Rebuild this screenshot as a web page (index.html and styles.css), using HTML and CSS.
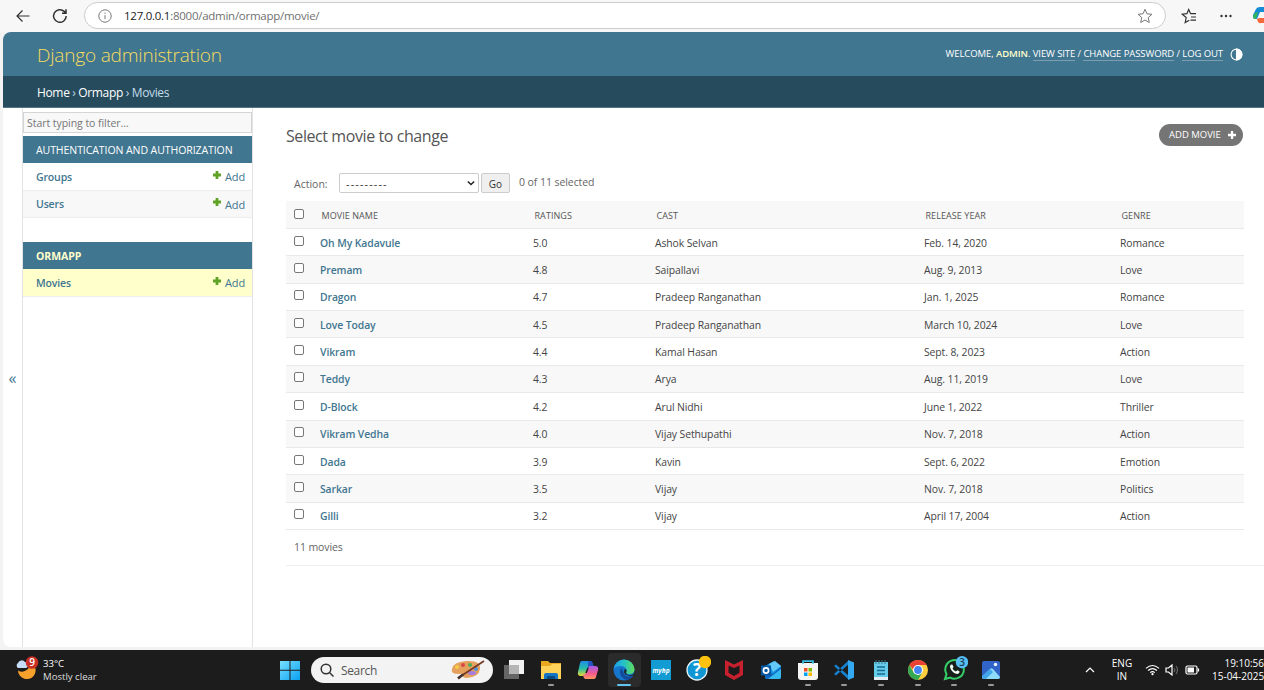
FILE: index.html
```html
<!DOCTYPE html>
<html lang="en">
<head>
<meta charset="utf-8">
<title>Select movie to change | Django site admin</title>
<link rel="stylesheet" href="styles.css">
</head>
<body>
<div class="browser-bar">
  <svg class="nav-icon back" viewBox="0 0 16 16"><path d="M14.500 8H2M7.500 2.500L2 8l5.500 5.500"/></svg>
  <svg class="nav-icon reload" viewBox="0 0 16 16"><path d="M14.200 8a6.300 6.300 0 1 1-2-4.600l1.800 1.800M14 1.300v4h-4"/></svg>
  <div class="address">
    <svg class="info" viewBox="0 0 14 14"><circle cx="7" cy="7" r="6.200"/><path d="M7 6.200v4M7 3.600v1.200"/></svg>
    <span class="url"><b>127.0.0.1</b>:8000/admin/ormapp/movie/</span>
    <svg class="star" viewBox="0 0 16 16"><path d="M8 1.300l2 4.500 4.900.5-3.700 3.300 1.100 4.900L8 12l-4.300 2.500 1.100-4.900L1.100 6.300 6 5.800z"/></svg>
  </div>
  <svg class="nav-icon favs" viewBox="0 0 16 16"><path d="M8.300 12.200l-4.100 2.300 1-5L1.200 6.200l4.700-.5L7.700 1.500l1.900 4.200H15M10 9h5M9.500 12.200H15"/></svg>
  <svg class="dots" viewBox="0 0 12 4"><circle cx="1.500" cy="2" r="1.200"/><circle cx="6" cy="2" r="1.200"/><circle cx="10.500" cy="2" r="1.200"/></svg>
  <svg class="copilot-edge" viewBox="0 0 11 18"><path d="M3 2Q4 0 7 0h4v5H7L4 12H2Q-1 11 0 8z" fill="#168bd5"/><path d="M2 6l3-1-2 7H2Q0 12 0 9z" fill="#36b45a"/><path d="M4 12l2-1h5v5H8Q5 17 4 12z" fill="#f6673e"/></svg>
</div>

<div class="page">
  <header class="site-header">
    <h1 class="brand">Django administration</h1>
    <div class="user-tools">
      <span class="user-text">WELCOME, <b>ADMIN</b>. <a>VIEW SITE</a> / <a>CHANGE PASSWORD</a> / <a>LOG OUT</a></span>
      <svg class="theme" viewBox="0 0 12 12"><circle cx="6" cy="6" r="5"/><path d="M6 1a5 5 0 0 1 0 10z"/></svg>
    </div>
  </header>
  <nav class="breadcrumbs"><span><a>Home</a> › <a>Ormapp</a> › Movies</span></nav>
  <div class="main">
    <div class="toggle">«</div>
    <aside class="sidebar">
      <input class="filter" placeholder="Start typing to filter...">
      <section class="app">
        <h2 class="caption">AUTHENTICATION AND AUTHORIZATION</h2>
        <div class="model"><b>Groups</b><span class="add"><svg viewBox="0 0 10 10"><path d="M3.600 1h2.800v2.600H9v2.800H6.400V9H3.600V6.400H1V3.600h2.600z"/></svg>Add</span></div>
        <div class="model alt"><b>Users</b><span class="add"><svg viewBox="0 0 10 10"><path d="M3.600 1h2.800v2.600H9v2.800H6.400V9H3.600V6.400H1V3.600h2.600z"/></svg>Add</span></div>
      </section>
      <section class="app">
        <h2 class="caption current">ORMAPP</h2>
        <div class="model selected"><b>Movies</b><span class="add"><svg viewBox="0 0 10 10"><path d="M3.600 1h2.800v2.600H9v2.800H6.400V9H3.600V6.400H1V3.600h2.600z"/></svg>Add</span></div>
      </section>
    </aside>
    <main class="content">
      <div class="title-row">
        <h2 class="title">Select movie to change</h2>
        <a class="add-movie"><span>ADD MOVIE</span><svg viewBox="0 0 10 10"><path d="M5 1v8M1 5h8"/></svg></a>
      </div>
      <div class="actions">
        <span class="action-label">Action:</span>
        <span class="select"><span>---------</span><svg viewBox="0 0 10 6"><path d="M1 1l4 4 4-4"/></svg></span>
        <span class="go">Go</span>
        <span class="counter">0 of 11 selected</span>
      </div>
      <div class="results">
        <div class="row head"><i class="check"></i><span>MOVIE NAME</span><span>RATINGS</span><span>CAST</span><span>RELEASE YEAR</span><span>GENRE</span></div>
        <div class="row"><i class="check"></i><b>Oh My Kadavule</b><span>5.0</span><span>Ashok Selvan</span><span>Feb. 14, 2020</span><span>Romance</span></div>
        <div class="row"><i class="check"></i><b>Premam</b><span>4.8</span><span>Saipallavi</span><span>Aug. 9, 2013</span><span>Love</span></div>
        <div class="row"><i class="check"></i><b>Dragon</b><span>4.7</span><span>Pradeep Ranganathan</span><span>Jan. 1, 2025</span><span>Romance</span></div>
        <div class="row"><i class="check"></i><b>Love Today</b><span>4.5</span><span>Pradeep Ranganathan</span><span>March 10, 2024</span><span>Love</span></div>
        <div class="row"><i class="check"></i><b>Vikram</b><span>4.4</span><span>Kamal Hasan</span><span>Sept. 8, 2023</span><span>Action</span></div>
        <div class="row"><i class="check"></i><b>Teddy</b><span>4.3</span><span>Arya</span><span>Aug. 11, 2019</span><span>Love</span></div>
        <div class="row"><i class="check"></i><b>D-Block</b><span>4.2</span><span>Arul Nidhi</span><span>June 1, 2022</span><span>Thriller</span></div>
        <div class="row"><i class="check"></i><b>Vikram Vedha</b><span>4.0</span><span>Vijay Sethupathi</span><span>Nov. 7, 2018</span><span>Action</span></div>
        <div class="row"><i class="check"></i><b>Dada</b><span>3.9</span><span>Kavin</span><span>Sept. 6, 2022</span><span>Emotion</span></div>
        <div class="row"><i class="check"></i><b>Sarkar</b><span>3.5</span><span>Vijay</span><span>Nov. 7, 2018</span><span>Politics</span></div>
        <div class="row"><i class="check"></i><b>Gilli</b><span>3.2</span><span>Vijay</span><span>April 17, 2004</span><span>Action</span></div>
      </div>
      <div class="paginator"><span>11 movies</span></div>
    </main>
  </div>
</div>

<footer class="taskbar">
  <div class="weather">
    <svg class="moon" viewBox="0 0 24 24"><path d="M15 7a8 8 0 0 1-12 7.500A8.800 8.800 0 1 0 19.500 10z" fill="#f5a12b"/><path d="M3 12a3 3 0 0 1 0-5 4 4 0 0 1 7-1 3 3 0 0 1 1 6z" fill="#c6dcf8"/><circle cx="17" cy="6.500" r="6.300" fill="#c92f25"/><text x="17" y="10.100" class="badge-text">9</text></svg>
    <div class="weather-text"><div>33°C</div><div class="sub">Mostly clear</div></div>
  </div>
  <svg class="start" viewBox="0 0 20 20"><defs><linearGradient id="win" x2="1" y2="1"><stop stop-color="#77e0ff"/><stop offset="1" stop-color="#0aa0f2"/></linearGradient></defs><path d="M0 1h9.500v8.800H0zM10.500 1H20v8.800h-9.500zM0 10.800h9.500V20H0zM10.500 10.800H20V20h-9.500z" fill="url(#win)"/></svg>
  <div class="search">
    <svg class="lens" viewBox="0 0 14 14"><circle cx="6" cy="6" r="4.800"/><path d="M9.500 9.500l4 4"/></svg>
    <span>Search</span>
    <svg class="palette" viewBox="0 0 36 20"><path d="M2 9Q3 2 16 1q15-1 14 8-1 8-13 9-5 0-4-3 1-2-4-1Q0 14 2 9z" fill="#e5a05d"/><circle cx="7" cy="7" r="2" fill="#f4cb42"/><circle cx="13" cy="5" r="2" fill="#d94747"/><circle cx="20" cy="5" r="2" fill="#4cae5a"/><ellipse cx="22" cy="13" rx="4" ry="2" fill="#a57ee0"/><circle cx="26" cy="9" r="2" fill="#4b91df"/><path d="M8 18L34 1" stroke="#753c28" stroke-width="1.800"/><path d="M8 18.500l5-4" stroke="#41312c" stroke-width="2.500"/></svg>
  </div>
  <div class="apps">
    <div class="app-icon"><svg viewBox="0 0 22 22"><path d="M1 6h15v14H1z" fill="#666"/><path d="M6 1h15v14H6z" fill="#f2f2f2"/><path d="M6 6h10v9H6z" fill="#b5b5b5"/></svg></div>
    <div class="app-icon open"><svg viewBox="0 0 22 22"><path d="M1 2h7l2 2h11v16H1z" fill="#e8a920"/><path d="M1 7h9l2-2h9v15H1z" fill="#ffd25a"/><path d="M4 20v-4q0-2 2-2h10q2 0 2 2v4z" fill="#1674c5"/><path d="M7 17h8v3H7z" fill="#084b82"/></svg></div>
    <div class="app-icon"><svg viewBox="0 0 22 22"><defs><linearGradient id="cpa" x2="0" y2="1"><stop stop-color="#208bea"/><stop offset=".5" stop-color="#27bda7"/><stop offset="1" stop-color="#e8d932"/></linearGradient><linearGradient id="cpb" x2="0" y2="1"><stop stop-color="#a65be8"/><stop offset=".6" stop-color="#f65c8c"/><stop offset="1" stop-color="#ff9a60"/></linearGradient></defs><path d="M5 2h8q2 0 2.500 2l1 3H12l-3 8q-1 2-3 2H4q-4 0-3-4L3 4q.500-2 2-2z" fill="url(#cpa)"/><path d="M17 20H9q-2 0-2.500-2L6 16q2 0 3-2l3-7h6q4 0 3 4l-2 7q-.500 2-2 2z" fill="url(#cpb)"/><path d="M11.500 2H13q2 0 2.500 2l1 3H12l-1.500 3z" fill="#2254c5"/><path d="M11 9l-2 5" stroke="#1c1c1c" stroke-width="1.500"/></svg></div>
    <div class="app-icon open focused"><svg viewBox="0 0 22 22"><defs><linearGradient id="edge" x2="1"><stop stop-color="#1e9be8"/><stop offset=".5" stop-color="#25c3c4"/><stop offset="1" stop-color="#62dc58"/></linearGradient></defs><circle cx="11" cy="11" r="10.500" fill="#1675cc"/><path d="M.600 10A10.500 10.500 0 0 1 21.500 10c0 4-3 5.500-6.500 5-2-.400-2.500-1.500-1.500-3C14 9 11 6.500 7 7 4 7.300 1.500 8.500.600 10z" fill="url(#edge)"/><path d="M8 9c-3 6 1 11 6.500 12 2.500-.700 4.500-2.200 5.800-4.200-5 2-9.800.2-10-4.300z" fill="#124b9b"/><path d="M13.700 12c-1.500 2 0 4 3 4 2.500 0 4-1 4.800-1.800l.3 2c-4 1.500-10.800.6-10.800-3.700 0-1.700 1-2.500 1.700-2.500.7.500 1 1.200 1 2z" fill="#202a2e"/></svg></div>
    <div class="app-icon"><svg viewBox="0 0 22 22"><path d="M1 1h20v20H1z" fill="#139bd3"/><text x="11" y="13.500" class="hp-text">myhp</text></svg></div>
    <div class="app-icon"><svg class="help" viewBox="0 0 26 26"><circle cx="12" cy="14" r="10" fill="#1196d4" stroke="#e7f4fa" stroke-width="1.300"/><text x="12" y="20" class="question">?</text><circle cx="20" cy="6" r="6.200" fill="#ffc20e"/></svg></div>
    <div class="app-icon"><svg viewBox="0 0 22 22"><path d="M2 1l9 4.500L20 1v15l-9 5-9-5z" fill="#c8202f"/><path d="M5.500 6.500L11 9l5.500-2.500v7.300L11 17l-5.500-3.200z" fill="#1b1b1b"/></svg></div>
    <div class="app-icon"><svg viewBox="0 0 22 22"><path d="M5 7l9-5 7 5v11q0 2-2 2H7q-2 0-2-2z" fill="#1490df"/><path d="M9 5l6-3 6 5-8 6z" fill="#64c9f5"/><path d="M5 11l8 4 8-7v10q0 2-2 2H7q-2 0-2-2z" fill="#1267be"/><path d="M8 20L21 10v8q0 2-2 2z" fill="#36b9ef"/><path d="M1 6.500h10v10H1z" fill="#0759a5"/><circle cx="6" cy="11.500" r="2.600" fill="none" stroke="#fff" stroke-width="1.700"/></svg></div>
    <div class="app-icon open"><svg viewBox="0 0 22 22"><path d="M6 6V2h10v4" fill="none" stroke="#39bde4" stroke-width="1.500"/><path d="M1 4h20v14q0 3-3 3H4q-3 0-3-3z" fill="#f5f5f5"/><path d="M6 5V2.500h10V5" fill="none" stroke="#39bde4" stroke-width="1.200"/><path d="M7 9h3.500v3.500H7z" fill="#f25022"/><path d="M11.500 9H15v3.500h-3.500z" fill="#7fba00"/><path d="M7 13.500h3.500V17H7z" fill="#00a4ef"/><path d="M11.500 13.500H15V17h-3.500z" fill="#ffb900"/></svg></div>
    <div class="app-icon open"><svg viewBox="0 0 22 22"><path d="M1 7l2-1.500L17 18l-2 2zM1 15l2 1.500L17 4l-2-2z" fill="#1681ce"/><path d="M15 1l6 2.500v15L15 21z" fill="#32a9f1"/></svg></div>
    <div class="app-icon open"><svg viewBox="0 0 22 22"><path d="M4 3h14v18H4z" fill="#65cde8"/><path d="M4 18h14v3H4z" fill="#e4eef2"/><path d="M6 1v4M9 1v4M12 1v4M15 1v4" stroke="#397687"/><path d="M7 8h8M7 11.500h8M7 15h8" stroke="#176b90" stroke-width="1.500"/></svg></div>
    <div class="app-icon open"><svg viewBox="0 0 22 22"><circle cx="11" cy="11" r="10" fill="#ffcd40"/><path d="M2.340 6A10 10 0 0 1 19.660 6H11v5H6.670z" fill="#e94335"/><path d="M2.340 6A10 10 0 0 0 11 21l4.300-7.500H11L6.670 13.500z" fill="#34a853"/><circle cx="11" cy="11" r="5" fill="#fff"/><circle cx="11" cy="11" r="3.900" fill="#4285f4"/></svg></div>
    <div class="app-icon open"><svg class="whatsapp" viewBox="0 0 26 26"><path d="M3 23l1.500-5a9.300 9.300 0 1 1 3.700 3.600z" fill="#172119" stroke="#35ce69" stroke-width="2"/><path d="M8 10q1-2 2.500-1.200l1 2.200-1 1.500q1 2 3.300 3l1.500-1.200 2.200 1q.5 2-2 2.700C12 18 8 14 8 10z" fill="#f1fff3"/><circle cx="20" cy="6.200" r="6.200" fill="#57bff4"/><text x="20" y="9.700" class="badge-text dark">3</text></svg></div>
    <div class="app-icon open"><svg viewBox="0 0 22 22"><rect x="2" y="2" width="18" height="18" rx="2" fill="#3263c9"/><path d="M2 18l8-8q1.500-1.500 3 0l7 8q0 2-2 2H4q-2 0-2-2z" fill="#8fdbfc"/><path d="M2 17l8-7 3 3-7 7H4q-2 0-2-3z" fill="#43a6eb"/><circle cx="15.500" cy="5.500" r="1.700" fill="#eef8ff"/></svg></div>
  </div>
  <div class="tray">
    <svg class="chevron" viewBox="0 0 10 6"><path d="M1 5l4-4 4 4"/></svg>
    <div class="language">ENG<br>IN</div>
    <svg class="wifi" viewBox="0 0 16 12"><path d="M1 4.200q7-6 14 0M3.300 6.500q4.700-4 9.400 0M5.600 8.800q2.400-2 4.800 0"/><circle cx="8" cy="10.400" r="1.200"/></svg>
    <svg class="sound" viewBox="0 0 14 12"><path d="M1 4h2.500L7 1v10L3.500 8H1z"/><path class="dim" d="M9 4q1.500 2 0 4M11 2q3 4 0 8"/></svg>
    <svg class="battery" viewBox="0 0 15 10"><rect x="1" y="1" width="11" height="8" rx="1.500"/><path class="fill" d="M2.500 2.500H9v5H2.500z"/><path d="M13.500 3.500v3"/></svg>
    <div class="clock">19:10:56<br>15-04-2025</div>
  </div>
</footer>
</body>
</html>
```
FILE: styles.css
```css
* { box-sizing: border-box; }
body {
  margin: 0;
  width: 1264px;
  height: 690px;
  overflow: hidden;
  background: #f3f3f3;
  color: #555;
  font: 11px "Open Sans", "Noto Sans", sans-serif;
  display: flex;
  flex-direction: column;
}
svg { display: block; flex: none; }
h1, h2 { margin: 0; font-weight: 400; }
b { font-weight: 600; }

.browser-bar { height: 32px; flex: none; display: flex; align-items: center; padding: 0 0 1px 15px; background: #f7f7f7; }
.nav-icon { width: 16px; height: 16px; fill: none; stroke: #333; stroke-width: 1.2; }
.reload { margin-left: 21px; stroke-width: 1.5; }
.address { width: 1083px; height: 27px; margin-left: 16px; padding: 0 12px 0 13px; border: 1px solid #ccc; border-radius: 14px; background: #fff; display: flex; align-items: center; }
.info { width: 14px; height: 14px; fill: none; stroke: #777; }
.url { margin-left: 12px; font-size: 11.500px; letter-spacing: -0.26px; color: #707070; white-space: nowrap; }
.url b { font-weight: 400; color: #222; }
.star { width: 16px; height: 16px; margin-left: auto; fill: none; stroke: #777; }
.favs { margin-left: 15px; }
.dots { width: 12px; height: 4px; margin-left: 23px; fill: #333; }
.copilot-edge { width: 11px; height: 18px; margin-left: 21px; }

.page { width: 1261px; height: 615px; flex: none; margin-left: 3px; background: #fff; border-radius: 8px 0 0 8px; overflow: hidden; display: flex; flex-direction: column; }
.site-header { height: 44px; flex: none; background: #417690; display: flex; align-items: center; justify-content: space-between; padding: 0 21px 0 34px; }
.brand { color: #f5dd5d; font-size: 19px; font-weight: 300; letter-spacing: -0.18px; line-height: 44px; padding-top: 2px; white-space: nowrap; }
.user-tools { display: flex; align-items: center; gap: 7px; color: #fff; font-size: 9.500px; }
.user-text { letter-spacing: -0.08px; padding-bottom: 1px; white-space: nowrap; }
.user-text a { border-bottom: 1px solid #7d9eb0; }
.user-text b { color: #ffc; }
.theme { width: 13px; height: 13px; fill: none; stroke: #fff; }
.theme path { fill: #fff; }
.breadcrumbs { height: 32px; flex: none; background: #264b5d; border-bottom: 1px solid #537589; padding: 2px 0 0 34px; display: flex; align-items: center; color: #c4dce8; font-size: 12px; letter-spacing: -0.35px; }
.breadcrumbs a { color: #fff; }
.main { flex: 1; display: flex; }
.toggle { width: 20px; flex: none; border-right: 1px solid #e3e3e3; color: #417690; font-size: 16px; display: flex; align-items: center; justify-content: center; }
.sidebar { width: 230px; flex: none; border-right: 1px solid #e3e3e3; padding-top: 4px; }
.filter { display: block; width: 229px; height: 21px; padding: 1px 4px 0 3px; border: 1px solid #d5d5d5; border-radius: 0; background: #f8f8f8; font: 10.500px "Open Sans", sans-serif; margin-bottom: 3px; letter-spacing: -0.05px; }
.filter::placeholder { color: #757575; }
.app { margin-bottom: 24px; }
.caption { height: 27px; padding-left: 13px; display: flex; align-items: center; background: #417690; color: #fff; font-size: 10.500px; letter-spacing: -0.07px; white-space: nowrap; }
.current { color: #ffc; font-weight: 700; }
.model { height: 27.500px; padding: 1px 7px 0 13px; display: flex; align-items: center; justify-content: space-between; color: #417690; font-size: 10.500px; letter-spacing: -0.15px; border-bottom: 1px solid #eee; }
.alt { background: #f8f8f8; }
.selected { background: #ffc; }
.add { display: flex; align-items: center; gap: 3px; font-size: 11px; }
.add svg { width: 10px; height: 10px; fill: #5fa225; margin-bottom: 4px; }

.content { flex: 1; padding: 15px 0 0 33px; }
.title-row { height: 27px; padding-right: 21px; display: flex; align-items: center; justify-content: space-between; }
.title { color: #555; font-size: 16px; letter-spacing: -0.42px; padding-bottom: 2px; white-space: nowrap; }
.add-movie { width: 84px; height: 22px; margin-top: -4px; padding: 0 6px 0 10px; border-radius: 11px; background: #757575; color: #fff; font-size: 9.500px; display: flex; align-items: center; justify-content: space-between; white-space: nowrap; }
.add-movie svg { width: 10px; height: 10px; stroke: #fff; stroke-width: 2.300; }
.actions { height: 51px; padding: 16px 0 1px 8px; display: flex; align-items: center; color: #666; font-size: 10.500px; }
.action-label { width: 45px; padding-top: 1px; }
.select { width: 140px; height: 20px; border: 1px solid #ccc; border-radius: 2px; background: #fff; color: #333; display: flex; align-items: center; justify-content: space-between; padding: 0 3px 0 6px; letter-spacing: 1.1px; }
.select span { font-size: 11px; }
.select svg { width: 8px; height: 6px; fill: none; stroke: #222; stroke-width: 1.800; }
.go { width: 29px; height: 20px; margin-left: 2px; padding-top: 1px; border: 1px solid #ccc; border-radius: 2px; background: #efefef; color: #333; font-size: 10px; display: flex; align-items: center; justify-content: center; }
.counter { margin-left: 9px; padding-bottom: 2px; letter-spacing: -0.07px; }
.results { width: 958px; }
.row { display: grid; grid-template-columns: 34px 213px 122px 269px 196px 124px; align-items: center; height: 27.360px; padding-top: 1px; border-bottom: 1px solid #e9e9e9; color: #444; font-size: 10.400px; letter-spacing: -0.09px; white-space: nowrap; }
.row b { color: #417690; }
.row:nth-child(odd) { background: #f8f8f8; }
.row.head { height: 28px; color: #555; font-size: 9px; letter-spacing: 0.07px; padding-top: 2px; }
.head span { padding-left: 1.500px; }
.check { width: 10px; height: 10px; margin: -4px 0 0 8px; border: 1px solid #777; border-radius: 2px; background: #fff; }
.paginator { height: 36px; border-bottom: 1px solid #eee; padding-left: 8px; display: flex; align-items: center; font-size: 10.500px; letter-spacing: -0.1px; color: #666; }

.taskbar { height: 40px; flex: none; margin-top: 3px; background: #1c1c1c; color: #fff; display: flex; align-items: center; }
.weather { width: 280px; padding-left: 15px; display: flex; align-items: center; gap: 4px; font-size: 9.600px; line-height: 13px; }
.moon { width: 24px; height: 24px; margin-bottom: 4px; }
.sub { color: #ddd; }
.badge-text { fill: #fff; font-size: 10px; font-weight: 600; text-anchor: middle; }
.dark { fill: #183d52; }
.start { width: 20px; height: 20px; }
.search { width: 182px; height: 26px; margin-left: 11px; padding: 0 7px 0 9px; border-radius: 13px; background: #f3f3f3; color: #555; display: flex; align-items: center; font-size: 12px; letter-spacing: -0.35px; }
.lens { width: 14px; height: 14px; margin-right: 7px; fill: none; stroke: #333; stroke-width: 1.500; }
.palette { width: 36px; height: 20px; margin-left: auto; }
.apps { width: 513.500px; margin-left: 3px; display: grid; grid-template-columns: repeat(14, 1fr); height: 40px; }
.app-icon { display: flex; flex-direction: column; align-items: center; justify-content: center; position: relative; }
.app-icon svg { width: 22px; height: 22px; }
.app-icon .help, .app-icon .whatsapp { width: 26px; height: 26px; margin: -3px 0 0 1px; }
.open::after { content: ""; position: absolute; bottom: 4px; width: 6px; height: 2px; border-radius: 1px; background: #999; }
.focused { background: #2b2b2b; border-radius: 4px; margin: 3px 2px; }
.focused::after { width: 14px; bottom: 1px; background: #60c5f1; }
.hp-text { fill: #fff; font: italic 700 6.500px "Open Sans", sans-serif; text-anchor: middle; }
.question { fill: #fff; font-size: 17px; font-weight: 700; text-anchor: middle; }
.tray { flex: 1; display: flex; align-items: center; justify-content: flex-end; font-size: 10px; line-height: 13px; white-space: nowrap; }
.tray svg { fill: none; stroke: #fff; stroke-width: 1.200; }
.chevron { width: 10px; height: 6px; }
.language { width: 24px; margin: 0 11px 0 15px; text-align: center; }
.wifi { width: 15px; height: 12px; }
.wifi circle { fill: #fff; stroke: none; }
.sound { width: 14px; height: 12px; margin-left: 5px; }
.tray .dim { stroke: #666; }
.battery { width: 15px; height: 10px; margin-left: 6px; }
.battery .fill { fill: #fff; stroke: none; }
.clock { width: 52px; margin-left: 12px; text-align: right; }
```
